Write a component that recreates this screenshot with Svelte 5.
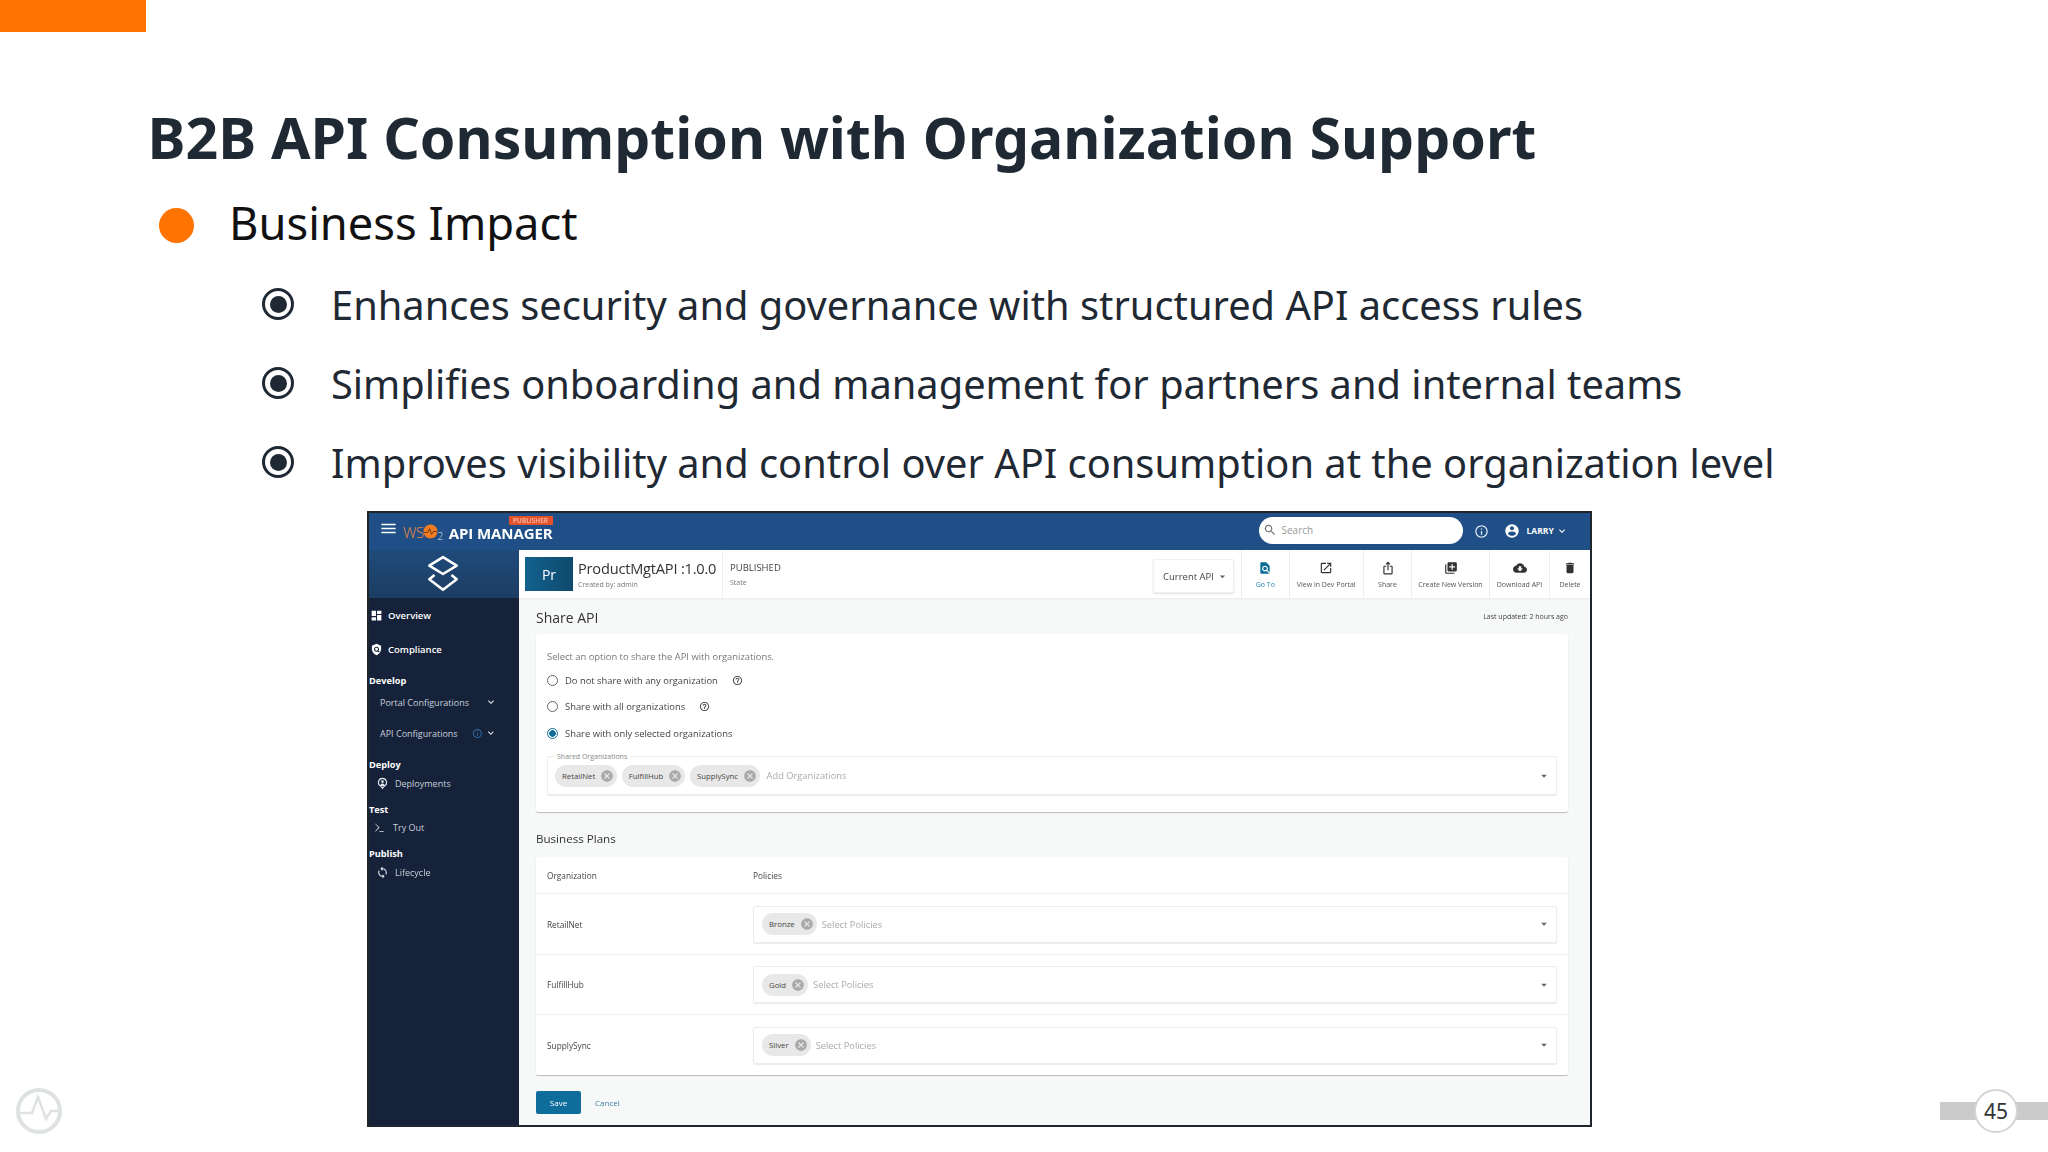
<script>
	const icons = {
		menu: 'M3 18h18v-2H3v2zm0-5h18v-2H3v2zm0-7v2h18V6H3z',
		dashboard: 'M3 13h8V3H3v10zm0 8h8v-6H3v6zm10 0h8V11h-8v10zm0-18v6h8V3h-8z',
		info: 'M11 7h2v2h-2zm0 4h2v6h-2zm1-9C6.48 2 2 6.48 2 12s4.48 10 10 10 10-4.48 10-10S17.52 2 12 2zm0 18c-4.41 0-8-3.59-8-8s3.59-8 8-8 8 3.59 8 8-3.59 8-8 8z',
		account: 'M12 2C6.48 2 2 6.48 2 12s4.48 10 10 10 10-4.48 10-10S17.52 2 12 2zm0 3c1.66 0 3 1.34 3 3s-1.34 3-3 3-3-1.34-3-3 1.34-3 3-3zm0 14.2c-2.5 0-4.71-1.28-6-3.22.03-1.99 4-3.08 6-3.08 1.99 0 5.97 1.09 6 3.08-1.29 1.94-3.5 3.22-6 3.22z',
		search: 'M15.5 14h-.79l-.28-.27C15.41 12.59 16 11.11 16 9.5 16 5.91 13.09 3 9.5 3S3 5.91 3 9.5 5.91 16 9.5 16c1.61 0 3.09-.59 4.23-1.57l.27.28v.79l5 4.99L20.49 19l-4.99-5zm-6 0C7.01 14 5 11.99 5 9.5S7.01 5 9.5 5 14 7.01 14 9.5 11.99 14 9.5 14z',
		open: 'M19 19H5V5h7V3H5c-1.11 0-2 .9-2 2v14c0 1.1.89 2 2 2h14c1.1 0 2-.9 2-2v-7h-2v7zM14 3v2h3.59l-9.83 9.83 1.41 1.41L19 6.41V10h2V3h-7z',
		share: 'M16 5l-1.42 1.42-1.59-1.59V16h-1.98V4.83L9.42 6.42 8 5l4-4 4 4zm4 5v11c0 1.1-.9 2-2 2H6c-1.11 0-2-.9-2-2V10c0-1.11.89-2 2-2h3v2H6v11h12V10h-3V8h3c1.1 0 2 .89 2 2z',
		add: 'M4 6H2v14c0 1.1.9 2 2 2h14v-2H4V6zm16-4H8c-1.1 0-2 .9-2 2v12c0 1.1.9 2 2 2h12c1.1 0 2-.9 2-2V4c0-1.1-.9-2-2-2zm-1 9h-4v4h-2v-4H9V9h4V5h2v4h4v2z',
		download: 'M19.35 10.04C18.67 6.59 15.64 4 12 4 9.11 4 6.6 5.64 5.35 8.04 2.34 8.36 0 10.91 0 14c0 3.31 2.69 6 6 6h13c2.76 0 5-2.24 5-5 0-2.64-2.05-4.78-4.65-4.96zM17 13l-5 5-5-5h3V9h4v4h3z',
		trash: 'M6 19c0 1.1.9 2 2 2h8c1.1 0 2-.9 2-2V7H6v12zM19 4h-3.5l-1-1h-5l-1 1H5v2h14V4z',
		find: 'M20 19.59V8l-6-6H6c-1.1 0-1.99.9-1.99 2L4 20c0 1.1.89 2 1.99 2H18c.45 0 .85-.15 1.19-.4l-4.43-4.43c-.8.52-1.74.83-2.76.83-2.76 0-5-2.24-5-5s2.24-5 5-5 5 2.24 5 5c0 1.02-.31 1.96-.83 2.75L20 19.59zM9 13c0 1.66 1.34 3 3 3s3-1.34 3-3-1.34-3-3-3-3 1.34-3 3z',
		help: 'M11 18h2v-2h-2v2zm1-16C6.48 2 2 6.48 2 12s4.48 10 10 10 10-4.48 10-10S17.52 2 12 2zm0 18c-4.41 0-8-3.59-8-8s3.59-8 8-8 8 3.59 8 8-3.59 8-8 8zm0-14c-2.21 0-4 1.79-4 4h2c0-1.1.9-2 2-2s2 .9 2 2c0 2-3 1.75-3 5h2c0-2.25 3-2.5 3-5 0-2.21-1.79-4-4-4z',
		cancel: 'M12 2C6.47 2 2 6.47 2 12s4.47 10 10 10 10-4.47 10-10S17.53 2 12 2zm5 13.59L15.59 17 12 13.41 8.41 17 7 15.59 10.59 12 7 8.41 8.41 7 12 10.59 15.59 7 17 8.41 13.41 12 17 15.59z',
		more: 'M16.59 8.59L12 13.17 7.41 8.59 6 10l6 6 6-6z',
		drop: 'M7 10l5 5 5-5z',
		loop: 'M12 4V1L8 5l4 4V6c3.31 0 6 2.69 6 6 0 1.01-.25 1.97-.7 2.8l1.46 1.46C19.54 15.03 20 13.57 20 12c0-4.42-3.58-8-8-8zm0 14c-3.31 0-6-2.69-6-6 0-1.01.25-1.97.7-2.8L5.24 7.74C4.46 8.97 4 10.43 4 12c0 4.42 3.58 8 8 8v3l4-4-4-4v3z',
		shield: 'M12 1.5L3.5 5v6.2c0 5.2 3.6 9.8 8.5 11.3 4.9-1.5 8.5-6.1 8.5-11.3V5L12 1.5zm0 5.3a4.7 4.7 0 0 1 3.9 7.3l2 2-1.4 1.4-2-2A4.7 4.7 0 1 1 12 6.800zm0 2a2.700 2.700 0 1 0 0 5.400 2.700 2.700 0 0 0 0-5.400z',
		pin: 'M12 1.500a8.500 8.500 0 0 0-4.500 15.700L12 22.500l4.500-5.300A8.500 8.500 0 0 0 12 1.500zm0 2a6.500 6.500 0 0 1 3.300 12.100L12 19.400l-3.300-3.800A6.500 6.500 0 0 1 12 3.500zM12 6a2.500 2.500 0 1 0 0 5 2.500 2.500 0 0 0 0-5zm-4 9.200c.8-2 2.300-3 4-3s3.200 1 4 3a6 6 0 0 1-8 0z',
		sum: 'M3 3l9 9-9 9h-.2v-1.400L9.500 12 2.800 4.400V3H3zM12 19.500h9V21h-9z'
	};

	const tools = [
		{ label: 'View in Dev Portal', icon: 'open', w: 74.5 },
		{ label: 'Share', icon: 'share', w: 48 },
		{ label: 'Create New Version', icon: 'add', w: 78 },
		{ label: 'Download API', icon: 'download', w: 60 },
		{ label: 'Delete', icon: 'trash', w: 41 }
	];

	const bullets = [
		'Enhances security and governance with structured API access rules',
		'Simplifies onboarding and management for partners and internal teams',
		'Improves visibility and control over API consumption at the organization level'
	];

	const options = [
		{ label: 'Do not share with any organization', help: true },
		{ label: 'Share with all organizations', help: true },
		{ label: 'Share with only selected organizations', on: true }
	];

	const plans = [
		{ org: 'RetailNet', plan: 'Bronze' },
		{ org: 'FulfillHub', plan: 'Gold' },
		{ org: 'SupplySync', plan: 'Silver' }
	];
</script>

{#snippet icon(name, cls)}
	<svg class={cls} viewBox="0 0 24 24" fill="currentColor"><path d={icons[name]} /></svg>
{/snippet}

{#snippet chip(text)}
	<span class="chip">{text}{@render icon('cancel', 'chip-x')}</span>
{/snippet}

<div class="slide">
	<div class="accent"></div>
	<h1>B2B API Consumption with Organization Support</h1>
	<div class="point">
		<span class="dot"></span>
		<span>Business Impact</span>
	</div>
	<ul class="bullets">
		{#each bullets as text}
			<li><span class="ring"><span></span></span>{text}</li>
		{/each}
	</ul>

	<div class="lower">
		<svg class="brand" viewBox="0 0 48 48" fill="none" stroke="#dfe2e2">
			<circle cx="24" cy="24" r="21" stroke-width="4" />
			<path d="M4 26h13l6-16 8 22 5-8h8" stroke-width="2.500" />
		</svg>

		<div class="frame">
			<header class="topbar">
				{@render icon('menu', 'burger')}
				<span class="wso">WS<span class="wso-o"><svg viewBox="0 0 16 16"><circle cx="8" cy="8" r="7.500" fill="#f47b20" /><path d="M1 9h4l2-4 2 6 2-3h4" fill="none" stroke="#5b3a1c" stroke-width="1" /></svg></span><sub>2</sub></span>
				<span class="product">API MANAGER<span class="badge">PUBLISHER</span></span>
				<div class="search">{@render icon('search', 'search-icon')}<span>Search</span></div>
				{@render icon('info', 'top-info')}
				{@render icon('account', 'top-user')}
				<span class="user">LARRY</span>
				{@render icon('more', 'top-more')}
			</header>

			<div class="app">
				<nav class="side">
					<div class="side-logo">
						<svg viewBox="0 0 32 36" fill="none" stroke="#fff" stroke-width="2.400" stroke-linejoin="round">
							<path d="M16 2l13 8-13 8-13-8z" />
							<path d="M8 19l-5 4 13 10 13-10-5-4" />
						</svg>
					</div>
					<div class="nav">
						<div class="main-item">{@render icon('dashboard', 'nav-icon')}Overview</div>
						<div class="main-item second">{@render icon('shield', 'nav-icon')}Compliance</div>

						<div class="group">Develop</div>
						<div class="sub first"><span class="sub-name">Portal Configurations</span>{@render icon('more', 'sub-more')}</div>
						<div class="sub next"><span class="sub-name">API Configurations</span>{@render icon('info', 'sub-info')}{@render icon('more', 'sub-more')}</div>

						<div class="group">Deploy</div>
						<div class="sub leaf">{@render icon('pin', 'leaf-icon')}Deployments</div>

						<div class="group close">Test</div>
						<div class="sub leaf tight">{@render icon('sum', 'leaf-icon try')}Try Out</div>

						<div class="group close">Publish</div>
						<div class="sub leaf">{@render icon('loop', 'leaf-icon')}Lifecycle</div>
					</div>
				</nav>

				<div class="content">
					<div class="api-bar">
						<div class="thumb">Pr</div>
						<div class="api-name">
							<div class="api-title">ProductMgtAPI :1.0.0</div>
							<div class="tiny">Created by: admin</div>
						</div>
						<div class="api-state">
							<div class="state">PUBLISHED</div>
							<div class="tiny">State</div>
						</div>
						<div class="current">Current API{@render icon('drop', 'current-drop')}</div>
						<div class="tool goto">
							{@render icon('find', 'tool-icon')}
							<span>Go To</span>
						</div>
						{#each tools as t}
							<div class="tool" style="width: {t.w}px">
								{@render icon(t.icon, 'tool-icon')}
								<span>{t.label}</span>
							</div>
						{/each}
					</div>

					<div class="page">
						<div class="page-head">
							<h2>Share API</h2>
							<span class="updated">Last updated: 2 hours ago</span>
						</div>

						<section class="card share">
							<div class="hint">Select an option to share the API with organizations.</div>
							{#each options as o}
								<div class="radio-row">
									<span class="radio" class:on={o.on}></span>
									<span>{o.label}</span>
									{#if o.help}{@render icon('help', 'help')}{/if}
								</div>
							{/each}
							<div class="field orgs">
								<span class="legend">Shared Organizations</span>
								{@render chip('RetailNet')}
								{@render chip('FulfillHub')}
								{@render chip('SupplySync')}
								<span class="placeholder">Add Organizations</span>
								{@render icon('drop', 'field-drop')}
							</div>
						</section>

						<h3>Business Plans</h3>

						<section class="card plans">
							<div class="plan-row head">
								<span>Organization</span>
								<span>Policies</span>
							</div>
							{#each plans as p}
								<div class="plan-row">
									<span>{p.org}</span>
									<div class="field">
										{@render chip(p.plan)}
										<span class="placeholder">Select Policies</span>
										{@render icon('drop', 'field-drop')}
									</div>
								</div>
							{/each}
						</section>

						<div class="actions">
							<span class="save">Save</span>
							<span class="cancel">Cancel</span>
						</div>
					</div>
				</div>
			</div>
		</div>

		<div class="pager">
			<div class="pager-bar"><span class="pager-num">45</span></div>
		</div>
	</div>
</div>

<style>
	:global(body) {
		background: #fff;
	}
	.slide {
		width: 2048px;
		height: 1152px;
		overflow: hidden;
		background: #fff;
		font-family: "Noto Sans", sans-serif;
		color: #1f2933;
		display: flex;
		flex-direction: column;
	}
	.accent {
		width: 146px;
		height: 32px;
		background: #ff7300;
		flex: none;
	}
	h1 {
		margin: 65px 0 0 147.500px;
		font-size: 57.150px;
		line-height: 80px;
		font-weight: 700;
		color: #1f2933;
		height: 80px;
	}
	.point {
		display: flex;
		align-items: center;
		margin: 15px 0 0 159px;
		height: 60px;
		font-size: 45.300px;
		color: #111;
		gap: 35px;
	}
	.dot {
		width: 35px;
		height: 35px;
		border-radius: 50%;
		background: #ff7300;
		margin-top: 6px;
	}
	.bullets {
		list-style: none;
		margin: 22px 0 0 262px;
		padding: 0;
		display: flex;
		flex-direction: column;
		gap: 19px;
	}
	.bullets li {
		display: flex;
		align-items: center;
		height: 60px;
		font-size: 39.800px;
		gap: 37px;
		white-space: nowrap;
	}
	.ring {
		width: 32px;
		height: 32px;
		border: 3px solid #1f2933;
		border-radius: 50%;
		box-sizing: border-box;
		display: flex;
		align-items: center;
		justify-content: center;
	}
	.ring span {
		width: 17px;
		height: 17px;
		border-radius: 50%;
		background: #1f2933;
	}

	.lower {
		flex: 1;
		display: grid;
		grid-template-columns: 367px 1225px 1fr;
		margin-top: 19px;
		min-height: 0;
	}
	.brand {
		width: 48px;
		height: 48px;
		margin: 0 0 17px 15px;
		align-self: end;
	}
	.pager {
		align-self: end;
		justify-self: end;
		margin-bottom: 32px;
	}
	.pager-bar {
		width: 108px;
		height: 18px;
		padding-left: 34px;
		box-sizing: border-box;
		background: #cbcbcb;
		display: flex;
		align-items: center;
	}
	.pager-num {
		width: 44px;
		height: 44px;
		box-sizing: border-box;
		border: 2px solid #d4d4d4;
		border-radius: 50%;
		background: #fff;
		display: flex;
		align-items: center;
		justify-content: center;
		font-size: 21px;
		color: #333;
		flex: none;
	}

	.frame {
		height: 616px;
		box-sizing: border-box;
		border: 2px solid #20262e;
		display: flex;
		flex-direction: column;
		font-family: "Open Sans", sans-serif;
		color: #333;
		filter: blur(0.35px);
		overflow: hidden;
	}
	.topbar {
		height: 37px;
		flex: none;
		background: #1f4f86;
		display: flex;
		align-items: center;
		color: #fff;
		padding-left: 11px;
	}
	.burger {
		width: 19px;
		height: 19px;
		margin: -6px 0 0 -1px;
	}
	.wso {
		margin-left: 5px;
		font-size: 15px;
		font-weight: 300;
		color: #f08a3c;
		display: flex;
		align-items: center;
		letter-spacing: -0.5px;
	}
	.wso-o {
		display: flex;
		margin-left: 0;
	}
	.wso-o svg {
		width: 15px;
		height: 15px;
		margin-left: -1px;
	}
	.wso sub {
		font-size: 10px;
		color: #d8e2ee;
		margin: 9px 0 0 0;
		line-height: 1;
	}
	.product {
		margin-left: 6px;
		font-size: 15px;
		font-weight: 700;
		letter-spacing: -0.1px;
		position: relative;
		white-space: nowrap;
		padding-top: 2px;
	}
	.badge {
		position: absolute;
		right: 0;
		top: -5px;
		width: 44px;
		height: 9px;
		line-height: 9px;
		background: #e4522b;
		border-radius: 1px;
		font-size: 6.500px;
		font-weight: 600;
		text-align: center;
		color: #f7c3ae;
		letter-spacing: 0;
	}
	.search {
		margin-left: 706px;
		width: 204px;
		height: 27px;
		margin-top: -3px;
		background: #fff;
		border-radius: 14px;
		display: flex;
		align-items: center;
		color: #9a9a9a;
		font-size: 10px;
		flex: none;
		padding-left: 4px;
		box-sizing: border-box;
		gap: 5px;
	}
	.search-icon {
		width: 14px;
		height: 14px;
		color: #777;
	}
	.top-info {
		width: 15px;
		height: 15px;
		margin: 0 0 0 11px;
		color: #dfe8f2;
	}
	.top-user {
		width: 16px;
		height: 16px;
		margin: -2px 0 0 15px;
	}
	.user {
		font-size: 8.500px;
		font-weight: 700;
		margin: -2px 0 0 7px;
	}
	.top-more {
		width: 12px;
		height: 12px;
		margin: -1px 0 0 2px;
	}

	.app {
		flex: 1;
		display: flex;
		min-height: 0;
	}
	.side {
		width: 150px;
		flex: none;
		background: #15223a;
		color: #fff;
		font-size: 9.500px;
	}
	.side-logo {
		height: 48px;
		background: linear-gradient(180deg, #1f4b7a, #1d3d62);
		display: flex;
		align-items: center;
		justify-content: center;
		padding-right: 3px;
		box-sizing: border-box;
	}
	.side-logo svg {
		width: 34px;
		height: 38px;
	}
	.nav {
		padding-top: 8px;
		display: flex;
		flex-direction: column;
	}
	.nav > div {
		height: 18px;
		display: flex;
		align-items: center;
		white-space: nowrap;
	}
	.main-item {
		font-weight: 600;
		font-size: 9.500px;
		gap: 5px;
		padding-left: 1px;
	}
	.main-item.second {
		margin-top: 16px;
	}
	.nav-icon {
		width: 13px;
		height: 13px;
	}
	.group {
		font-weight: 700;
		font-size: 9.200px;
		margin-top: 13px;
	}
	.group.close {
		margin-top: 8px;
	}
	.sub {
		color: #c9d0da;
		font-size: 9px;
	}
	.sub.first {
		margin-top: 4px;
		padding-left: 11px;
	}
	.sub.next {
		margin-top: 13px;
		padding-left: 11px;
	}
	.sub.leaf {
		margin-top: 1px;
		padding-left: 7px;
		gap: 6px;
	}
	.sub.leaf.tight {
		margin-top: 0;
		padding-left: 5px;
		gap: 8px;
	}
	.sub-name {
		flex: 0 0 auto;
	}
	.sub-more {
		width: 12px;
		height: 12px;
		margin-left: auto;
		margin-right: 22px;
		color: #e5e9ee;
	}
	.sub-info {
		width: 11px;
		height: 11px;
		margin-left: 14px;
		color: #2f6fa8;
	}
	.sub-info + :global(.sub-more) {
		margin-left: 3px;
	}
	.leaf-icon {
		width: 13px;
		height: 13px;
		color: #e5e9ee;
	}
	.leaf-icon.try {
		width: 11px;
		height: 11px;
	}

	.content {
		flex: 1;
		min-width: 0;
		display: flex;
		flex-direction: column;
		background: #f7f8f8;
	}
	.api-bar {
		height: 48px;
		flex: none;
		background: #fff;
		box-shadow: 0 1px 2px rgba(0, 0, 0, 0.06);
		display: flex;
		align-items: stretch;
		padding-left: 6px;
	}
	.thumb {
		width: 48px;
		height: 34px;
		margin-top: 7px;
		background: linear-gradient(90deg, #12618f, #0f4a6c);
		color: #fff;
		font-size: 14px;
		display: flex;
		align-items: center;
		justify-content: center;
	}
	.api-name {
		width: 150px;
		padding-left: 5px;
		border-right: 1px solid #eee;
		box-sizing: border-box;
	}
	.api-title {
		font-size: 14.600px;
		line-height: 20px;
		margin-top: 8px;
		white-space: nowrap;
		color: #333;
		letter-spacing: -0.2px;
	}
	.tiny {
		font-size: 7px;
		color: #777;
		line-height: 10px;
		margin-top: 2px;
	}
	.api-state {
		padding-left: 7px;
		width: 430px;
		box-sizing: border-box;
		flex: none;
	}
	.state {
		font-size: 9.500px;
		line-height: 14px;
		margin-top: 11px;
		color: #444;
	}
	.api-state .tiny {
		margin-top: 3px;
	}
	.current {
		width: 81px;
		height: 34px;
		margin-top: 9px;
		flex: none;
		box-sizing: border-box;
		background: #fff;
		border: 1px solid #f0f0f0;
		box-shadow: 0 1px 2px rgba(0, 0, 0, 0.12);
		border-radius: 2px;
		display: flex;
		align-items: center;
		padding-left: 9px;
		font-size: 9.500px;
		color: #444;
		white-space: nowrap;
	}
	.current-drop {
		width: 13px;
		height: 13px;
		margin-left: 2px;
		color: #666;
	}
	.tool {
		flex: none;
		box-sizing: border-box;
		border-left: 1px solid #eee;
		display: flex;
		flex-direction: column;
		align-items: center;
		font-size: 7px;
		color: #555;
		white-space: nowrap;
		padding-top: 11px;
		gap: 5px;
	}
	.tool.goto {
		width: 47.500px;
		margin-left: 7px;
		color: #2a86ad;
	}
	.tool-icon {
		width: 14px;
		height: 14px;
		color: #333;
	}
	.goto :global(.tool-icon) {
		color: #0d6c96;
	}

	.page {
		flex: 1;
		padding: 0 22px 0 17px;
		display: flex;
		flex-direction: column;
	}
	.page-head {
		height: 36px;
		flex: none;
		display: flex;
		align-items: center;
		justify-content: space-between;
		box-sizing: border-box;
		padding-top: 3px;
	}
	h2 {
		margin: 0;
		font-size: 14px;
		font-weight: 400;
		color: #333;
	}
	.updated {
		font-size: 7px;
		color: #444;
		margin-top: -3px;
	}
	h3 {
		margin: 0;
		height: 45px;
		flex: none;
		display: flex;
		align-items: center;
		font-size: 11.600px;
		font-weight: 400;
		color: #333;
		box-sizing: border-box;
		padding-top: 7px;
	}
	.card {
		background: #fff;
		border-radius: 2px;
		box-shadow: 0 1px 1px rgba(0, 0, 0, 0.25);
		flex: none;
	}
	.share {
		height: 178px;
		padding: 13px 11px 0;
		box-sizing: border-box;
		font-size: 9.400px;
		color: #555;
	}
	.hint {
		line-height: 20px;
		color: #777;
	}
	.radio-row {
		height: 26.500px;
		display: flex;
		align-items: center;
		gap: 7px;
		color: #444;
	}
	.radio-row:first-of-type {
		margin-top: 3.500px;
	}
	.radio {
		width: 11px;
		height: 11px;
		box-sizing: border-box;
		border: 1.200px solid #666;
		border-radius: 50%;
		flex: none;
	}
	.radio.on {
		border-color: #0f6d9b;
		background: radial-gradient(circle, #0f6d9b 0 3px, #fff 3.500px);
	}
	.help {
		width: 11px;
		height: 11px;
		margin-left: 7px;
		color: #444;
	}
	.field {
		position: relative;
		flex: 1;
		height: 37px;
		border: 1px solid #ececec;
		box-shadow: 0 1px 1px rgba(0, 0, 0, 0.08);
		border-radius: 2px;
		background: #fff;
		display: flex;
		align-items: center;
		padding-left: 8px;
		box-sizing: border-box;
	}
	.orgs {
		height: 39px;
		margin-top: 9.500px;
		gap: 4.500px;
		padding-left: 7px;
	}
	.legend {
		position: absolute;
		left: 6px;
		top: -5px;
		padding: 0 3px;
		background: #fff;
		font-size: 7px;
		line-height: 9px;
		color: #888;
	}
	.chip {
		height: 22px;
		border-radius: 11px;
		background: #e8e8e8;
		display: inline-flex;
		align-items: center;
		padding: 0 3px 0 7px;
		gap: 5px;
		font-size: 7.800px;
		color: #444;
		white-space: nowrap;
		flex: none;
	}
	.chip-x {
		width: 14px;
		height: 14px;
		color: #a9a9a9;
	}
	.placeholder {
		font-size: 9.300px;
		color: #aaa;
		margin-left: 2px;
		white-space: nowrap;
	}
	.field-drop {
		width: 14px;
		height: 14px;
		margin-left: auto;
		margin-right: 5px;
		color: #666;
	}
	.plans {
		height: 218px;
		display: flex;
		flex-direction: column;
		font-size: 8.300px;
		color: #444;
	}
	.plan-row {
		height: 60.500px;
		box-sizing: border-box;
		border-top: 1px solid #f2f2f2;
		display: flex;
		align-items: center;
		padding: 1px 11px 0 0;
	}
	.plan-row.head {
		height: 36px;
		border-top: none;
	}
	.plan-row > span:first-child {
		width: 217px;
		padding-left: 11px;
		box-sizing: border-box;
		flex: none;
	}
	.plan-row .placeholder {
		margin-left: 5px;
	}
	.actions {
		display: flex;
		align-items: center;
		margin-top: 16px;
		gap: 14px;
	}
	.save {
		width: 45px;
		height: 23px;
		border-radius: 2px;
		background: #0f6d9b;
		color: #fff;
		font-size: 8px;
		display: flex;
		align-items: center;
		justify-content: center;
	}
	.cancel {
		font-size: 8px;
		color: #3d7fa3;
	}
</style>
